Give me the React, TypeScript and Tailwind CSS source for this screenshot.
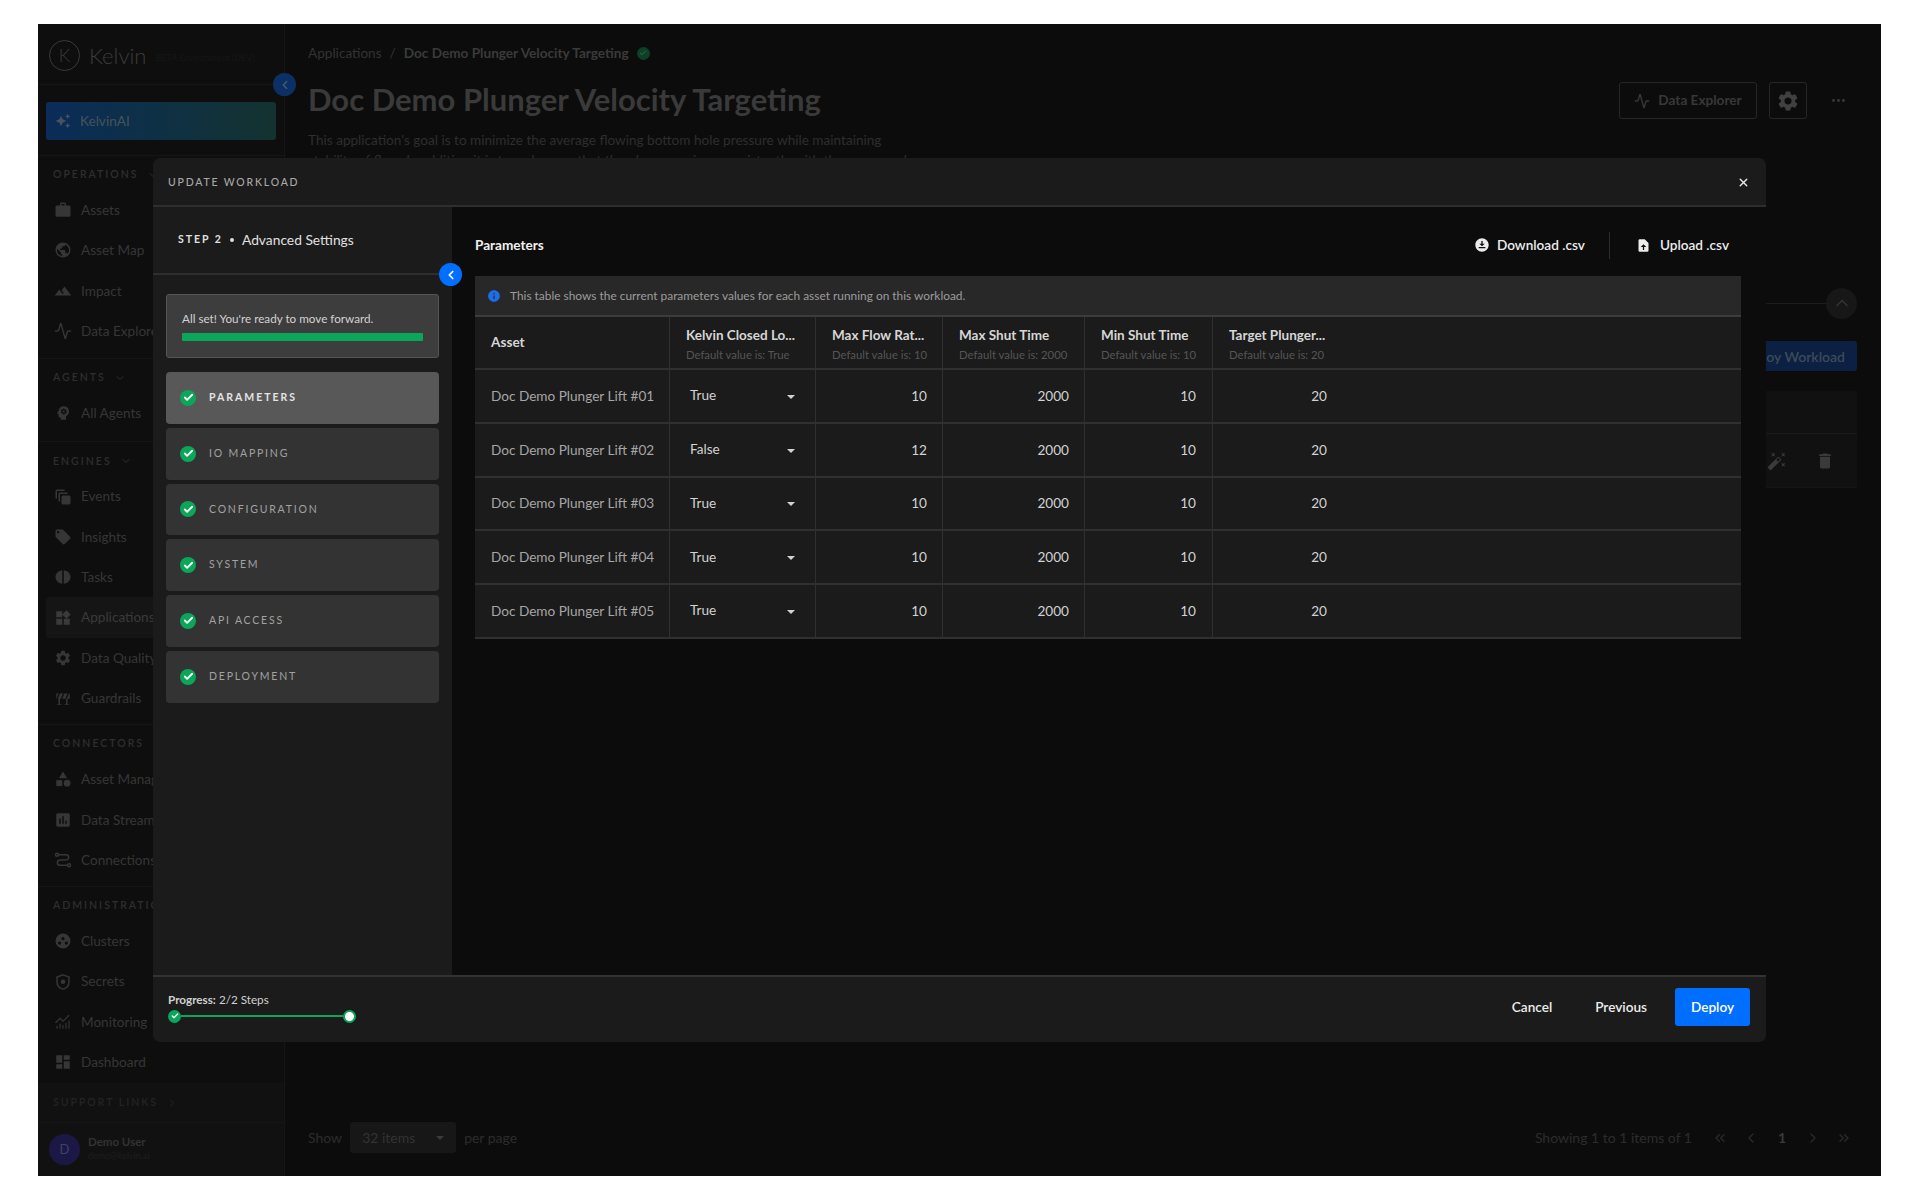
import { Activity, Check, ChevronDown, ChevronLeft, ChevronRight, ChevronUp, ChevronsLeft, ChevronsRight, Ellipsis, X } from 'lucide-react'
import {
  MdAssessment,
  MdAutoAwesome,
  MdAutoAwesomeMotion,
  MdAutoFixHigh,
  MdCategory,
  MdDashboard,
  MdDelete,
  MdDownloadForOffline,
  MdInfo,
  MdLandscape,
  MdLocalOffer,
  MdPublic,
  MdPsychology,
  MdSettings,
  MdWidgets,
  MdWork,
} from 'react-icons/md'
import type { ComponentType } from 'react'

type Icon = ComponentType<{ className?: string }>
type SvgProps = { className?: string }

function Barrier({ className }: SvgProps) {
  return (
    <svg viewBox="0 0 24 24" className={className} fill="currentColor">
      <path d="M3 6h18v7H3zM6 13h2v7H6zM16 13h2v7h-2zM4 20h6v1H4zM14 20h6v1h-6z" />
      <path d="M6 6h2l-3 7H3zM12 6h2l-3 7H9zM18 6h2l-3 7h-2z" fill="#0e0e0e" />
    </svg>
  )
}

function HalfCircles({ className }: SvgProps) {
  return (
    <svg viewBox="0 0 24 24" className={className} fill="currentColor">
      <path d="M11 3v18C6 20.500 2 16.800 2 12s4-8.500 9-9zM13 3c5 .5 9 4.200 9 9s-4 8.500-9 9z" />
    </svg>
  )
}

function SCurve({ className }: SvgProps) {
  return (
    <svg viewBox="0 0 24 24" className={className} fill="none" stroke="currentColor" strokeWidth="2">
      <circle cx="4" cy="5" r="2" />
      <circle cx="20" cy="19" r="2" />
      <path d="M6 5h10a3.500 3.500 0 0 1 0 7H8a3.500 3.500 0 0 0 0 7h10" />
    </svg>
  )
}

function ClusterDots({ className }: SvgProps) {
  return (
    <svg viewBox="0 0 24 24" className={className} fill="currentColor" fillRule="evenodd">
      <path d="M12 2a10 10 0 1 1 0 20 10 10 0 0 1 0-20zM12 6.500a2.200 2.200 0 1 0 0 4.400 2.200 2.200 0 0 0 0-4.400zM7.500 12.500a2.200 2.200 0 1 0 0 4.400 2.200 2.200 0 0 0 0-4.400zM16.500 12.500a2.200 2.200 0 1 0 0 4.400 2.200 2.200 0 0 0 0-4.400z" />
    </svg>
  )
}

function ShieldDot({ className }: SvgProps) {
  return (
    <svg viewBox="0 0 24 24" className={className} fill="none" stroke="currentColor" strokeWidth="2">
      <path d="M12 2.500l8 3v6c0 5-3.400 8.600-8 10-4.600-1.400-8-5-8-10v-6z" />
      <circle cx="12" cy="11.500" r="3" fill="currentColor" stroke="none" />
    </svg>
  )
}

function MonitoringChart({ className }: SvgProps) {
  return (
    <svg viewBox="0 0 24 24" className={className} fill="none" stroke="currentColor" strokeWidth="1.500">
      <path d="M2 13l6-6 4 4 8-8" />
      <path d="M4 21v-4M8 21v-7M12 21v-5M16 21v-8M20 21v-11" />
    </svg>
  )
}

function FileUploadSolid({ className }: SvgProps) {
  return (
    <svg viewBox="0 0 24 24" className={className} fill="currentColor" fillRule="evenodd">
      <path d="M6 2h8l6 6v12a2 2 0 0 1-2 2H6a2 2 0 0 1-2-2V4a2 2 0 0 1 2-2zM12 10l-4.500 4.500H11V19h2v-4.500h3.500z" />
    </svg>
  )
}

const sections: { title: string; chevron?: boolean; pb: string; items: [string, Icon][] }[] = [
  {
    title: 'OPERATIONS',
    chevron: true,
    pb: 'pb-[7px] border-b',
    items: [
      ['Assets', MdWork],
      ['Asset Map', MdPublic],
      ['Impact', MdLandscape],
      ['Data Explorer', Activity],
    ],
  },
  { title: 'AGENTS', chevron: true, pb: 'pb-[8px] border-b', items: [['All Agents', MdPsychology]] },
  {
    title: 'ENGINES',
    chevron: true,
    pb: 'pb-[6px] border-b',
    items: [
      ['Events', MdAutoAwesomeMotion],
      ['Insights', MdLocalOffer],
      ['Tasks', HalfCircles],
      ['Applications', MdWidgets],
      ['Data Quality', MdSettings],
      ['Guardrails', Barrier],
    ],
  },
  {
    title: 'CONNECTORS',
    pb: 'pb-[6px] border-b',
    items: [
      ['Asset Management', MdCategory],
      ['Data Streams', MdAssessment],
      ['Connections', SCurve],
    ],
  },
  {
    title: 'ADMINISTRATION',
    pb: '',
    items: [
      ['Clusters', ClusterDots],
      ['Secrets', ShieldDot],
      ['Monitoring', MonitoringChart],
      ['Dashboard', MdDashboard],
    ],
  },
]

const steps = ['PARAMETERS', 'IO MAPPING', 'CONFIGURATION', 'SYSTEM', 'API ACCESS', 'DEPLOYMENT']

const columns = [
  { name: 'Kelvin Closed Lo...', hint: 'Default value is: True' },
  { name: 'Max Flow Rat...', hint: 'Default value is: 10' },
  { name: 'Max Shut Time', hint: 'Default value is: 2000' },
  { name: 'Min Shut Time', hint: 'Default value is: 10' },
  { name: 'Target Plunger...', hint: 'Default value is: 20' },
]

const rows = [
  { asset: 'Doc Demo Plunger Lift #01', closed: 'True', flow: '10' },
  { asset: 'Doc Demo Plunger Lift #02', closed: 'False', flow: '12' },
  { asset: 'Doc Demo Plunger Lift #03', closed: 'True', flow: '10' },
  { asset: 'Doc Demo Plunger Lift #04', closed: 'True', flow: '10' },
  { asset: 'Doc Demo Plunger Lift #05', closed: 'True', flow: '10' },
]

const gridCols = 'grid grid-cols-[194px_146px_127px_142px_128px_131px_1fr]'

function Sidebar() {
  return (
    <aside className="w-[247px] h-full flex-shrink-0 flex flex-col bg-[#0e0e0e] border-r border-[#161616]">
      {/* Logo */}
      <div className="h-[61px] flex-shrink-0 flex items-center gap-[9px] pl-[11px] pt-[2px] border-b border-[#161616] relative">
        <div className="w-[31px] h-[31px] rounded-full border border-[#3a3a3a] flex items-center justify-center text-[18px] font-light text-[#3a3a3a]">
          K
        </div>
        <span className="text-[22px] font-light text-[#3c3c3c]">Kelvin</span>
        <span className="text-[9px] text-[#161616] mt-[6px] whitespace-nowrap">BETA Environment (DEV)</span>
        <button className="absolute right-[-12px] top-[49px] w-[23px] h-[23px] rounded-full bg-[#0b3164] text-[#4b5d75] flex items-center justify-center">
          <ChevronLeft className="w-3.5 h-3.5" />
        </button>
      </div>

      {/* KelvinAI */}
      <div className="h-[71px] flex-shrink-0 px-2 pt-[17px] border-b border-[#161616]">
        <div className="h-[38px] rounded-[3px] bg-gradient-to-r from-[#0b2c58] to-[#14322f] flex items-center gap-[9px] pl-[9px] text-[13.6px] text-[#46535c]">
          <MdAutoAwesome className="w-[16px] h-[16px]" />
          KelvinAI
        </div>
      </div>

      {sections.map((section) => (
        <div key={section.title} className={`flex-shrink-0 border-[#161616] ${section.pb}`}>
          <div className="h-5 mt-[9px] mb-[5px] pl-[15px] flex items-center gap-2 text-[10.5px] tracking-[2px] text-[#2e2e2e] font-semibold whitespace-nowrap">
            {section.title}
            {section.chevron && <ChevronDown className="w-3 h-3" />}
          </div>
          {section.items.map(([label, ItemIcon]) => (
            <div
              key={label}
              className={
                label === 'Applications'
                  ? 'h-[40.3px] mx-2 pl-2 flex items-center gap-[9px] rounded-[3px] bg-[#151515] text-[13.6px] text-[#3a3a3a]'
                  : 'h-[40.3px] mx-2 pl-2 flex items-center gap-[9px] text-[13.6px] text-[#363636]'
              }
            >
              <ItemIcon className="w-[18px] h-[18px] flex-shrink-0" />
              <span className="whitespace-nowrap">{label}</span>
            </div>
          ))}
        </div>
      ))}

      <div className="mt-auto h-[39px] flex-shrink-0 bg-[#111111] flex items-center gap-2 pl-[15px] text-[10.5px] tracking-[2px] font-semibold text-[#242424]">
        SUPPORT LINKS
        <ChevronRight className="w-3 h-3" />
      </div>
      <div className="h-[54px] flex-shrink-0 bg-[#111111] border-t border-[#161616] flex items-center gap-2 pl-[11px]">
        <div className="w-[31px] h-[31px] rounded-full bg-[#1c1846] flex items-center justify-center text-[13px] text-[#40406a]">
          D
        </div>
        <div className="leading-none -mt-[3px]">
          <p className="text-[11.5px] font-bold text-[#333333]">Demo User</p>
          <p className="text-[9px] text-[#1e1e1e] mt-1">demo@kelvin.ai</p>
        </div>
      </div>
    </aside>
  )
}

function Background() {
  return (
    <main className="flex-1 min-w-0 h-full flex flex-col pl-[23px] pr-[24px] pt-[19px] pb-[23px]">
      <div className="h-5 flex items-center gap-2 text-[13.6px] text-[#333333]">
        <span>Applications</span>
        <span>/</span>
        <span className="font-bold text-[#3a3a3a]">Doc Demo Plunger Velocity Targeting</span>
        <span className="w-[13px] h-[13px] rounded-full bg-[#0d4026] text-[#3f6b52] flex items-center justify-center">
          <Check className="w-2 h-2" strokeWidth={3} />
        </span>
      </div>

      <div className="mt-[19px] h-[37px] flex items-center">
        <h1 className="text-[31px] font-bold text-[#3a3a3a] whitespace-nowrap -mt-[2px]">Doc Demo Plunger Velocity Targeting</h1>
        <div className="ml-auto flex items-center">
          <button className="h-[37px] w-[138px] rounded-[3px] border border-[#262626] flex items-center justify-center gap-2 text-[13.6px] font-bold text-[#383838]">
            <Activity className="w-4 h-4" />
            Data Explorer
          </button>
          <button className="ml-3 h-[37px] w-[38px] rounded-[3px] border border-[#262626] flex items-center justify-center text-[#404040]">
            <MdSettings className="w-6 h-6" />
          </button>
          <Ellipsis className="ml-[23px] mr-[10px] w-[17px] h-[17px] text-[#3a3a3a]" />
        </div>
      </div>

      <p className="mt-[11px] text-[13.6px] leading-5 text-[#2e2e2e] whitespace-nowrap">
        This application's goal is to minimize the average flowing bottom hole pressure while maintaining
        <br />
        stability of flow. In addition it is to make sure that the plunger arrives consistently with the proper column
      </p>

      <div className="mt-[117px] h-[32px] flex items-center">
        <div className="flex-1 h-px bg-[#1c1c1c]" />
        <div className="w-[31px] h-[31px] rounded-full bg-[#171717] flex items-center justify-center text-[#333333]">
          <ChevronUp className="w-5 h-5" />
        </div>
      </div>

      <div className="mt-[22px] flex justify-end">
        <button className="h-[30px] pl-8 pr-3 rounded-[3px] bg-[#0b2042] text-[14px] font-semibold text-[#3f4a58]">Deploy Workload</button>
      </div>

      <div className="mt-5 bg-[#111111]">
        <div className="h-[43px] border-b border-[#1a1a1a]" />
        <div className="h-[54px] flex items-center justify-end gap-[28px] pr-[22px] border-b border-[#161616] text-[#3a3a3a]">
          <MdAutoFixHigh className="w-[20px] h-[20px]" />
          <MdDelete className="w-[20px] h-[20px]" />
        </div>
      </div>

      <div className="mt-auto h-[31px] flex items-center text-[14px] text-[#2c2c2c]">
        <span>Show</span>
        <div className="ml-2 h-[31px] w-[106px] rounded-[3px] bg-[#171717] flex items-center px-3 text-[#333333]">
          32 items
          <span className="ml-auto w-0 h-0 border-x-[4px] border-x-transparent border-t-[4px] border-t-[#3a3a3a]" />
        </div>
        <span className="ml-2">per page</span>
        <span className="ml-auto">Showing 1 to 1 items of 1</span>
        <div className="ml-5 pr-[5px] flex items-center gap-[15px] text-[#2a2a2a]">
          <ChevronsLeft className="w-4 h-4" />
          <ChevronLeft className="w-4 h-4" />
          <span className="w-4 text-center font-bold text-[#3a3a3a]">1</span>
          <ChevronRight className="w-4 h-4" />
          <ChevronsRight className="w-4 h-4" />
        </div>
      </div>
    </main>
  )
}

function StepList() {
  return (
    <div className="px-[13px] mt-[19px]">
      <div className="h-[64px] rounded-[3px] bg-[#3d3d3d] border border-[#555555] px-[15px] pt-[16px]">
        <p className="text-[11.7px] leading-[14px] text-[#d2d2d2]">All set! You're ready to move forward.</p>
        <div className="mt-[8px] h-2 rounded-[1px] bg-[#0aa65a]" />
      </div>
      <div className="mt-[14px] flex flex-col gap-1">
        {steps.map((step, i) => (
          <div
            key={step}
            className={
              i === 0
                ? 'h-[51.75px] rounded-[4px] bg-[#585858] flex items-center pl-[14px] gap-[13px] text-[10.5px] font-bold tracking-[2px] text-[#e4e4e4]'
                : 'h-[51.75px] rounded-[4px] bg-[#333333] flex items-center pl-[14px] gap-[13px] text-[10.5px] tracking-[1.8px] text-[#a2a2a2]'
            }
          >
            <span className="w-4 h-4 rounded-full bg-[#0aa65a] flex items-center justify-center text-white">
              <Check className="w-[11px] h-[11px]" strokeWidth={4} />
            </span>
            {step}
          </div>
        ))}
      </div>
    </div>
  )
}

function ParamsTable() {
  return (
    <div className="bg-[#1b1b1b]">
      <div className={`${gridCols} h-[53px] border-b-2 border-[#303030]`}>
        <div className="flex items-center pl-4 text-[13.6px] font-bold text-[#d6d6d6]">Asset</div>
        {columns.map((col) => (
          <div key={col.name} className="border-l border-[#303030] pl-4 pt-[10px] whitespace-nowrap">
            <p className="text-[13.5px] leading-[16px] font-bold text-[#d6d6d6]">{col.name}</p>
            <p className="text-[11.3px] leading-[13px] mt-[5px] text-[#565656]">{col.hint}</p>
          </div>
        ))}
        <div />
      </div>
      {rows.map((row) => (
        <div key={row.asset} className={`${gridCols} h-[53.8px] border-b-2 border-[#303030] text-[13.6px] text-[#d2d2d2]`}>
          <div className="flex items-center pl-4 text-[#a6a6a6] whitespace-nowrap">{row.asset}</div>
          <div className="border-l border-[#303030] flex items-center pl-5 pr-5">
            <span className="-mt-[1px]">{row.closed}</span>
            <span className="ml-auto mt-[2px] w-0 h-0 border-x-[4px] border-x-transparent border-t-[4px] border-t-[#d2d2d2]" />
          </div>
          <div className="border-l border-[#303030] flex items-center justify-end pr-[15px]">{row.flow}</div>
          <div className="border-l border-[#303030] flex items-center justify-end pr-[15px]">2000</div>
          <div className="border-l border-[#303030] flex items-center justify-end pr-4">10</div>
          <div className="border-l border-[#303030] flex items-center justify-end pr-4">20</div>
          <div />
        </div>
      ))}
    </div>
  )
}

function WorkloadModal() {
  return (
    <div className="absolute left-[153px] top-[158px] w-[1613px] h-[884px] rounded-[7px] bg-[#1b1b1b] flex flex-col overflow-hidden">
      <div className="h-[49px] flex-shrink-0 flex items-center justify-between pl-[15px] pr-4 pt-[2px] border-b-2 border-[#2e2e2e]">
        <span className="text-[10.5px] tracking-[1.8px] font-medium text-[#a8a8a8]">UPDATE WORKLOAD</span>
        <X className="w-[13px] h-[13px] text-[#e8e8e8]" strokeWidth={2.5} />
      </div>

      <div className="flex-1 min-h-0 flex">
        {/* Panel izquierdo */}
        <div className="w-[299px] flex-shrink-0 relative">
          <div className="h-[68px] flex items-center pl-[25px] border-b-2 border-[#2e2e2e] text-[#e0e0e0]">
            <span className="text-[10.5px] font-bold tracking-[2px]">STEP 2</span>
            <span className="ml-[7px] mr-[8px] w-[4px] h-[4px] rounded-full bg-[#e0e0e0]" />
            <span className="text-[13.8px]">Advanced Settings</span>
          </div>
          <button className="absolute right-[-10px] top-[56px] w-[23px] h-[23px] rounded-full bg-[#006eff] text-white flex items-center justify-center">
            <ChevronLeft className="w-3.5 h-3.5" strokeWidth={3} />
          </button>
          <StepList />
        </div>

        {/* Contenido */}
        <div className="flex-1 min-w-0 bg-[#0c0c0c] pl-[23px] pr-[25px]">
          <div className="h-[69px] pt-[7px] flex items-center">
            <span className="text-[13.6px] font-bold text-[#f0f0f0]">Parameters</span>
            <div className="ml-auto flex items-center pr-[12px] text-[13.6px] font-semibold text-[#ececec]">
              <MdDownloadForOffline className="w-[16px] h-[16px] mr-[7px]" />
              Download .csv
              <span className="ml-[24px] mr-[26px] w-px h-[27px] bg-[#2c2c2c]" />
              <FileUploadSolid className="w-[15px] h-[15px] mr-[9px]" />
              Upload .csv
            </div>
          </div>
          <div className="h-[41px] flex items-center gap-[9px] pl-3 bg-[#282828] border-b-2 border-[#3c3c3c] text-[11.9px] text-[#9c9c9c]">
            <MdInfo className="w-[14px] h-[14px] text-[#1c6fe8]" />
            This table shows the current parameters values for each asset running on this workload.
          </div>
          <ParamsTable />
        </div>
      </div>

      <div className="h-[67px] flex-shrink-0 border-t-2 border-[#333333] flex items-center pl-[15px] pr-4 pb-[5px]">
        <div>
          <p className="text-[11.7px] leading-[14px] text-[#d0d0d0]">
            <span className="font-bold">Progress:</span> 2/2 Steps
          </p>
          <div className="mt-[4px] flex items-center w-[188px]">
            <span className="w-[13px] h-[13px] rounded-full bg-[#0aa65a] flex items-center justify-center text-white flex-shrink-0">
              <Check className="w-2 h-2" strokeWidth={4} />
            </span>
            <span className="flex-1 h-[2px] bg-[#0aa65a]" />
            <span className="w-[13px] h-[13px] rounded-full bg-white border-2 border-[#0aa65a] flex-shrink-0" />
          </div>
        </div>
        <div className="ml-auto flex items-center text-[13.6px] font-semibold text-[#ececec]">
          <button>Cancel</button>
          <button className="ml-[43px]">Previous</button>
          <button className="ml-[28px] h-[38px] w-[75px] rounded-[3px] bg-[#006eff] text-white">Deploy</button>
        </div>
      </div>
    </div>
  )
}

export default function App() {
  return (
    <div className="relative w-[1920px] h-[1200px] bg-white pt-6 pb-6 pl-[38px] pr-[39px] font-['Lato',sans-serif] overflow-hidden">
      <div className="h-full flex bg-[#0c0c0c]">
        <Sidebar />
        <Background />
      </div>
      <WorkloadModal />
    </div>
  )
}
